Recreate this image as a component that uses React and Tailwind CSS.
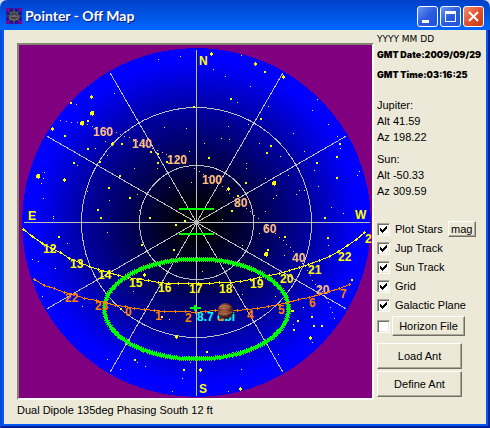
import React from "react";

const STARS = [
  [158,59,1],[180,56,1],[211,54,3],[91,97,3],[114,93,1],[241,55,1],[213,69,1],[225,76,1],[231,99,2],
  [255,64,3],[265,72,2],[283,77,3],[250,86,1],[317,99,1],[71,103,2],[76,104,1],[92,113,4],[237,102,1],
  [268,106,1],[312,110,1],[194,107,2],[88,121,2],[82,123,4],[52,129,3],[65,136,2],[164,127,1],[186,128,1],
  [112,144,3],[122,144,2],[88,149,2],[95,148,1],[105,141,1],[74,163,2],[77,165,1],[38,176,4],[44,172,1],
  [41,183,1],[43,178,1],[64,180,3],[43,198,1],[100,162,2],[107,155,1],[120,176,2],[134,168,1],[109,188,2],
  [87,191,1],[109,200,1],[130,198,2],[98,210,2],[101,218,2],[139,210,1],[150,218,2],[137,194,1],[151,152,2],
  [158,154,2],[158,163,2],[167,162,2],[157,168,1],[189,151,1],[191,182,1],[169,187,1],[181,197,1],[185,221,2],
  [176,225,2],[53,216,1],[53,218,1],[35,212,1],[261,119,2],[248,124,1],[228,126,1],[221,138,1],[229,139,1],
  [204,143,1],[209,158,2],[259,143,1],[271,146,2],[267,153,2],[280,156,1],[293,133,1],[328,124,1],[337,136,1],
  [340,144,2],[340,148,1],[337,157,2],[304,151,1],[317,163,2],[314,170,1],[359,171,1],[357,175,1],[337,178,2],
  [246,163,1],[246,168,1],[246,183,2],[236,182,1],[265,178,1],[274,183,4],[288,175,1],[276,195,1],[273,198,1],
  [296,194,1],[299,190,1],[304,190,1],[318,186,1],[228,189,3],[238,196,2],[232,211,2],[222,219,1],[265,211,1],
  [325,218,2],[331,207,1],[343,213,1],[59,237,2],[67,243,1],[107,232,1],[142,245,2],[174,250,2],[32,259,1],
  [38,261,1],[42,296,1],[55,268,1],[82,306,1],[144,275,3],[133,291,1],[162,317,2],[169,319,1],[121,309,2],
  [259,233,1],[285,237,2],[328,238,2],[242,245,1],[266,254,4],[268,250,2],[284,255,1],[328,245,1],[242,294,1],
  [202,271,1],[275,296,1],[352,280,2],[292,311,2],[303,307,1],[298,321,2],[312,317,2],[314,326,2],[322,326,2],
  [176,337,3],[207,352,2],[135,360,2],[137,362,1],[107,359,1],[120,369,1],[145,366,1],[184,370,2],[200,370,3],
  [190,362,1],[182,378,1],[172,391,1],[241,369,1],[240,389,3],[228,391,1],[278,354,1],[310,338,3],[312,342,1],
  [294,330,2],[293,311,2],[293,324,1],
];

const SUN_TRACK = [
  [23,229],[32,236],[42,243],[51,248],[60,252],[69,258],[79,262],[89,266],[98,269],[108,272],[118,275],
  [128,277],[138,279],[148,280],[158,282],[168,283],[178,283],[188,283],[198,283],[209,283],[219,282],
  [230,282],[240,281],[250,279],[259,277],[269,275],[279,273],[289,270],[299,267],[308,264],[319,260],
  [329,256],[338,251],[347,245],[356,239],[364,232],
];

const JUPITER_TRACK = [
  [34,279],[44,285],[54,288],[64,292],[74,294],[84,298],[96,300],[105,302],[115,305],[125,306],[134,308],
  [144,309],[154,310],[164,311],[175,311],[185,311],[195,312],[205,311],[215,310],[226,310],[237,310],
  [247,309],[257,308],[268,306],[278,304],[288,302],[298,299],[309,297],[319,294],[329,291],[339,288],[349,284],
];

const GALACTIC_PLANE = [
  [60,120],[82,123],[116,132],[137,141],[152,148],[176,158],[190,165],[203,174],[222,186],[233,197],[250,211],
  [262,222],[275,233],[290,247],[300,259],[307,270],[312,280],[322,291],[328,302],[332,312],[336,323],
];

const GALACTIC_DOTS = GALACTIC_PLANE.slice(1).flatMap(([x, y], i) => {
  const [px, py] = GALACTIC_PLANE[i];
  const n = Math.max(1, Math.round(Math.hypot(x - px, y - py) / 5));
  return Array.from({ length: n }, (_, k) => [
    Math.round(px + ((x - px) * k) / n),
    Math.round(py + ((y - py) * k) / n),
  ]);
});

const SUN_LABELS = [
  ["12",43,253],["13",70,268],["14",98,279],["15",129,287],["16",158,292],["17",189,293],["18",219,293],
  ["19",250,288],["20",280,283],["21",308,274],["22",338,261],["2",365,243],
];
const JUPITER_LABELS = [
  ["22",65,302],["23",95,310],["0",125,316],["1",155,320],["2",185,322],["3",217,321],["4",247,319],
  ["5",278,314],["6",309,307],["7",340,298],
];
const GALACTIC_LABELS = [
  ["160",93,136],["140",132,148],["120",167,164],["100",202,184],["80",234,207],["60",263,233],["40",292,262],["20",316,294],
];
const COMPASS = [["N",199,65],["S",199,393],["E",28,220],["W",355,219]];

const RAYS = Array.from({ length: 12 }, (_, i) => {
  const a = (i * Math.PI) / 6;
  return [196.5 + 173 * Math.cos(a), 222.5 + 173 * Math.sin(a)];
});

function Labels({ items, fill }) {
  return (
    <g fill={fill}>
      {items.map(([t, x, y]) => (
        <text key={t + x} x={x} y={y}>{t}</text>
      ))}
    </g>
  );
}

function Track({ points, color }) {
  return (
    <g shapeRendering="crispEdges">
      <polyline
        points={points.map(([x, y]) => `${x + 0.5},${y + 0.5}`).join(" ")}
        fill="none"
        stroke={color}
      />
      {points.map(([x, y]) => (
        <path key={x} d={`M${x} ${y - 1}h1v1h1v1h-1v1h-1v-1h-1v-1h1z`} fill={color} />
      ))}
    </g>
  );
}

function Star({ x, y, size }) {
  if (size === 1) return <rect x={x} y={y} width="1" height="1" />;
  if (size === 2) return <rect x={x - 1} y={y - 1} width="2" height="2" />;
  if (size === 3) return <path d={`M${x} ${y - 2}h1v1h1v2h-1v1h-1v-1h-1v-2h1z`} />;
  return <path d={`M${x - 1} ${y - 2}h3v4h-1v1h-1v-1h-2v-3h1z`} />;
}

function SkyMap() {
  return (
    <svg
      viewBox="19 45 353 353"
      role="img"
      aria-label="Sky map"
      className="block h-auto w-full bg-[#800080] font-['Liberation_Sans',sans-serif] text-[12px] font-bold"
    >
      <defs>
        <radialGradient id="sky">
          <stop offset="0" stopColor="#000000" />
          <stop offset="0.1" stopColor="#000008" />
          <stop offset="0.33" stopColor="#000048" />
          <stop offset="0.66" stopColor="#0000a4" />
          <stop offset="0.93" stopColor="#0000ff" />
        </radialGradient>
        <radialGradient id="planet" cx="0.4" cy="0.4">
          <stop offset="0" stopColor="#b87858" />
          <stop offset="0.6" stopColor="#8c4a34" />
          <stop offset="1" stopColor="#401a18" />
        </radialGradient>
      </defs>
      <circle cx="196.5" cy="222.5" r="174.5" fill="url(#sky)" shapeRendering="crispEdges" />
      <g stroke="#c0c0c0" fill="none" shapeRendering="crispEdges">
        {RAYS.map(([x, y], i) => (
          <line key={i} x1="196.5" y1="222.5" x2={x} y2={y} />
        ))}
        <circle cx="196.5" cy="222.5" r="57" />
        <circle cx="196.5" cy="222.5" r="115" />
      </g>
      <circle cx="196.5" cy="222.5" r="2.5" fill="#c0c0c0" />
      <g fill="#ffc080" shapeRendering="crispEdges">
        {GALACTIC_DOTS.map(([x, y]) => (
          <rect key={`${x}-${y}`} x={x} y={y} width="1" height="1" />
        ))}
      </g>
      <g fill="#ffff00" shapeRendering="crispEdges">
        {STARS.map(([x, y, s], i) => (
          <Star key={i} x={x} y={y} size={s} />
        ))}
      </g>
      <Labels items={GALACTIC_LABELS} fill="#ffc080" />
      <Labels items={COMPASS} fill="#ffff00" />
      <Track points={SUN_TRACK} color="#ffff00" />
      <Labels items={SUN_LABELS} fill="#ffff00" />
      <g fill="none" stroke="#00ff00" shapeRendering="crispEdges">
        <ellipse cx="196.5" cy="309" rx="92" ry="50" strokeWidth="3" />
        <ellipse cx="196.5" cy="309" rx="92" ry="50" strokeWidth="5" strokeDasharray="1 1" />
        <path d="M179 209h35M179 234h35" strokeWidth="2" />
      </g>
      <Track points={JUPITER_TRACK} color="#ff8000" />
      <text x="197" y="321" fill="#00ffff">8.7 dbi</text>
      <Labels items={JUPITER_LABELS} fill="#ff8000" />
      <path d="M190 308h11M195 305v6" stroke="#00ff00" strokeWidth="2" shapeRendering="crispEdges" />
      <circle cx="225.5" cy="311" r="8" fill="url(#planet)" />
      <path d="M219 307q6-3 12 0M218 313q7 3 14-1" fill="none" stroke="#d09878" strokeOpacity="0.6" />
      <path d="M218 310h14" stroke="#5c2820" strokeOpacity="0.7" />
    </svg>
  );
}

const RAISED =
  "border border-t-white border-l-white border-r-[#716f64] border-b-[#716f64] bg-[#ece9d8] shadow-[inset_-1px_-1px_0_#aca899] text-center";

function CheckMark() {
  return (
    <svg viewBox="0 0 7 7" className="size-[7px]" shapeRendering="crispEdges" aria-hidden="true">
      <path d="M0 2h1v1h1v1h1v-1h1v-1h1v-1h1v-1h1v3h-1v1h-1v1h-1v1h-1v1h-1v-1h-1v-1h-1z" fill="#000" />
    </svg>
  );
}

function Check({ id, checked, label }) {
  return (
    <span className="grid place-items-center">
      <input
        id={id}
        type="checkbox"
        defaultChecked={checked}
        aria-label={label}
        className="peer col-start-1 row-start-1 size-[13px] appearance-none border border-t-[#aca899] border-l-[#aca899] border-r-white border-b-white bg-white shadow-[inset_1px_1px_0_#716f64,inset_-1px_-1px_0_#ece9d8]"
      />
      <span className="pointer-events-none invisible col-start-1 row-start-1 peer-checked:visible">
        <CheckMark />
      </span>
    </span>
  );
}

function Option({ id, label, children }) {
  return (
    <div className="flex h-4 items-center gap-[5px]">
      <Check id={id} checked />
      <label htmlFor={id} className="whitespace-nowrap">{label}</label>
      {children}
    </div>
  );
}

function TitleBar() {
  const button =
    "grid size-[21px] place-items-center rounded-[3px] border border-white";
  return (
    <header className="flex h-[30px] items-center gap-[3px] rounded-t-[7px] bg-linear-to-b from-[#0040c8] via-[#0054e3] to-[#0066ff] px-[6px] pt-[2px]">
      <svg viewBox="0 0 16 16" className="size-4" aria-hidden="true">
        <rect width="16" height="16" fill="#800080" />
        <circle cx="8" cy="8" r="8" fill="#1010c0" />
        <circle cx="8" cy="8" r="6.5" fill="#282848" />
        <path d="M8 0v16M0 8h16M2 2l12 12M14 2L2 14" stroke="#8080a0" strokeWidth="0.5" />
        <circle cx="8" cy="8" r="4" fill="none" stroke="#9090a0" strokeWidth="0.5" />
        <ellipse cx="8" cy="10" rx="5" ry="2" fill="none" stroke="#807040" />
      </svg>
      <h1 className="flex-1 whitespace-nowrap font-['Lato',sans-serif] text-[14px] font-bold leading-4 text-white [text-shadow:1px_1px_#0a1883]">
        Pointer - Off Map
      </h1>
      <div className="flex gap-[2px]">
        <button aria-label="Minimize" className={`${button} bg-linear-to-br from-[#6a94f0] via-[#2b5ce0] to-[#2050d8]`}>
          <svg viewBox="0 0 19 19" className="size-[19px]"><path d="M4 13h7v3H4z" fill="#fff" /></svg>
        </button>
        <button aria-label="Maximize" className={`${button} bg-linear-to-br from-[#6a94f0] via-[#2b5ce0] to-[#2050d8]`}>
          <svg viewBox="0 0 19 19" className="size-[19px]"><path d="M4 4h11v11H4zM5 7v7h9V7z" fill="#fff" fillRule="evenodd" /></svg>
        </button>
        <button aria-label="Close" className={`${button} bg-linear-to-br from-[#f09070] via-[#e0502c] to-[#c83c10]`}>
          <svg viewBox="0 0 19 19" className="size-[19px]"><path d="M5 5l9 9M14 5l-9 9" stroke="#fff" strokeWidth="2" /></svg>
        </button>
      </div>
    </header>
  );
}

export default function App() {
  return (
    <div className="flex min-h-screen flex-col bg-[#d8d8f0] font-['Liberation_Sans',Arial,sans-serif] text-[11px] leading-4 text-black">
      <TitleBar />
      <div className="flex flex-1 flex-col border-x-2 border-b-2 border-l-[#0848d8] border-r-[#001c98] border-b-[#001c98]">
        <div className="flex flex-1 flex-col border-x-2 border-b-2 border-[#0058ee] bg-[#ece9d8]">
          <div className="flex items-start pl-[13px]">
            <main className="mt-[13px] min-w-0 flex-1">
              <div className="border-2 border-t-[#858272] border-l-[#858272] border-r-white border-b-white">
                <SkyMap />
              </div>
            </main>
            <aside className="flex w-28 flex-col pl-[3px] pt-[3px]">
              <p className="font-['DejaVu_Sans',sans-serif] text-[9px] leading-3">YYYY MM DD</p>
              <div className="whitespace-nowrap font-['Inter',sans-serif] text-[9px] font-black leading-5">
                <p>GMT Date:2009/09/29</p>
                <p>GMT Time:03:16:25</p>
              </div>
              <section className="mt-3">
                <p>Jupiter:</p>
                <p>Alt 41.59</p>
                <p>Az 198.22</p>
              </section>
              <section className="mt-[6px]">
                <p>Sun:</p>
                <p>Alt -50.33</p>
                <p>Az 309.59</p>
              </section>
              <div className="mt-[22px] flex flex-col gap-[3px]">
                <Option id="stars" label="Plot Stars">
                  <button className={`h-4 w-7 leading-3 ${RAISED}`}>mag</button>
                </Option>
                <Option id="jup" label="Jup Track" />
                <Option id="sun" label="Sun Track" />
                <Option id="grid" label="Grid" />
                <Option id="galactic" label="Galactic Plane" />
                <div className="flex items-center gap-[2px]">
                  <Check id="horizon" label="Horizon" />
                  <button className={`h-5 w-[73px] whitespace-nowrap ${RAISED}`}>Horizon File</button>
                </div>
              </div>
              <div className="mt-[7px] flex w-[85px] flex-col gap-[2px]">
                <button className={`h-[26px] ${RAISED}`}>Load Ant</button>
                <button className={`h-[26px] ${RAISED}`}>Define Ant</button>
              </div>
            </aside>
          </div>
          <p className="pl-[13px] pt-[2px]">Dual Dipole 135deg Phasing South 12 ft</p>
        </div>
      </div>
    </div>
  );
}
